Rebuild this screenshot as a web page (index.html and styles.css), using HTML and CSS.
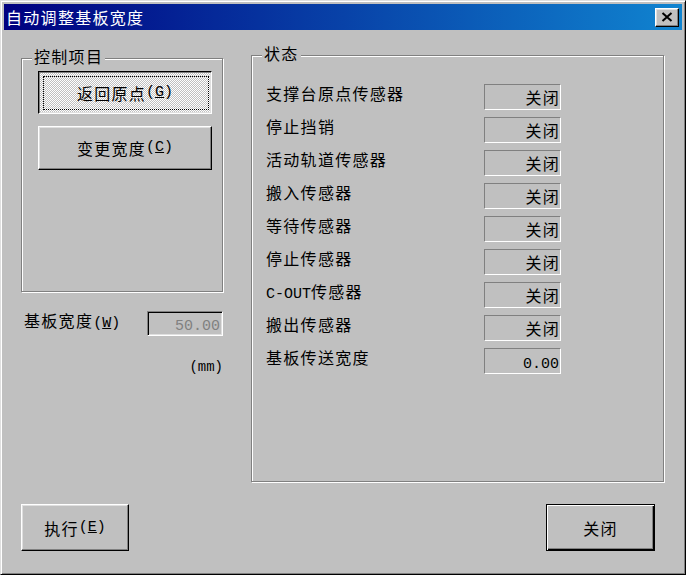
FILE: index.html
```html
<!DOCTYPE html>
<html lang="zh-CN">
<head>
<meta charset="utf-8">
<title>自动调整基板宽度</title>
<link rel="stylesheet" href="styles.css">
</head>
<body>
<div class="window">
  <div class="titlebar">
    <span class="title">自动调整基板宽度</span>
    <div class="close-btn">
      <svg width="12" height="10" viewBox="0 0 12 10"><path d="M1.5 1 L10.5 9 M10.5 1 L1.5 9" stroke="#000" stroke-width="2" fill="none"/></svg>
    </div>
  </div>
  <div class="body">
    <div class="top">
      <div class="left">
        <div class="group ctrl">
          <span class="legend">控制项目</span>
          <div class="btn checked b1">返回原点<span class="a">(<u>G</u>)</span></div>
          <div class="btn b2">变更宽度<span class="a">(<u>C</u>)</span></div>
        </div>
        <div class="width-row">
          <span class="lbl">基板宽度<span class="a">(<u>W</u>)</span></span>
          <div class="field"><span class="a">50.00</span></div>
        </div>
        <div class="unit"><span class="a">(mm)</span></div>
      </div>
      <div class="group status">
        <span class="legend">状态</span>
        <div class="grid">
          <span class="name">支撑台原点传感器</span><span class="val">关闭</span>
          <span class="name">停止挡销</span><span class="val">关闭</span>
          <span class="name">活动轨道传感器</span><span class="val">关闭</span>
          <span class="name">搬入传感器</span><span class="val">关闭</span>
          <span class="name">等待传感器</span><span class="val">关闭</span>
          <span class="name">停止传感器</span><span class="val">关闭</span>
          <span class="name"><span class="a">C-OUT</span>传感器</span><span class="val">关闭</span>
          <span class="name">搬出传感器</span><span class="val">关闭</span>
          <span class="name">基板传送宽度</span><span class="val num"><span class="a">0.00</span></span>
        </div>
      </div>
    </div>
    <div class="bottom">
      <div class="btn big exec">执行<span class="a">(<u>E</u>)</span></div>
      <div class="btn big default">关闭</div>
    </div>
  </div>
</div>
</body>
</html>
```
FILE: styles.css
```css
html, body {
  margin: 0;
  padding: 0;
}
body {
  font-family: "Noto Sans CJK SC", "Noto Sans", sans-serif;
  font-size: 16px;
  line-height: 16px;
  letter-spacing: 1.3px;
  color: #000;
  background: #c0c0c0;
}
.a {
  font-family: "Liberation Mono", "DejaVu Sans Mono", monospace;
  font-size: 15px;
  letter-spacing: 0;
}
.window {
  width: 686px;
  height: 575px;
  box-sizing: border-box;
  border: 1px solid;
  border-color: #dfdfdf #000 #000 #dfdfdf;
  box-shadow: inset 1px 1px 0 #fff, inset -1px -1px 0 #808080;
  padding: 3px;
  background: #c0c0c0;
  display: flex;
  flex-direction: column;
}
.titlebar {
  height: 26px;
  background: linear-gradient(to right, #000080, #1084d0);
  display: flex;
  align-items: center;
  justify-content: space-between;
  padding: 0 3px 0 2px;
  flex: none;
}
.title {
  color: #fff;
}
.close-btn {
  width: 24px;
  height: 19px;
  box-sizing: border-box;
  background: #c0c0c0;
  border: 1px solid;
  border-color: #fff #000 #000 #fff;
  box-shadow: inset -1px -1px 0 #808080, inset 1px 1px 0 #dfdfdf;
  display: flex;
  align-items: center;
  justify-content: center;
}
.close-btn svg {
  display: block;
  margin: 0 1px 1px 0;
}
.body {
  flex: 1;
  padding: 25px 18px 0 17px;
  display: flex;
  flex-direction: column;
}
.top {
  display: flex;
  gap: 28px;
}
.left {
  width: 202px;
  display: flex;
  flex-direction: column;
}
.group {
  position: relative;
  box-sizing: border-box;
  border: 1px solid #808080;
  box-shadow: inset 1px 1px 0 #fff, 1px 1px 0 #fff;
}
.legend {
  position: absolute;
  top: -11px;
  left: 10px;
  padding: 0 2px;
  background: #c0c0c0;
}
.ctrl {
  width: 202px;
  height: 234px;
  margin-top: 3px;
  padding: 12px 0 0 16px;
  display: flex;
  flex-direction: column;
  gap: 12px;
}
.btn {
  position: relative;
  box-sizing: border-box;
  border: 1px solid;
  border-color: #fff #000 #000 #fff;
  box-shadow: inset -1px -1px 0 #808080, inset 1px 1px 0 #dfdfdf;
  display: flex;
  align-items: center;
  justify-content: center;
  background: #c0c0c0;
}
.b1 {
  width: 174px;
  height: 43px;
}
.b2 {
  width: 174px;
  height: 44px;
}
.checked {
  border-color: #000 #fff #fff #000;
  box-shadow: inset 1px 1px 0 #808080, inset -1px -1px 0 #dfdfdf;
  background: repeating-conic-gradient(#fff 0 25%, #c0c0c0 0 50%) 0 0 / 2px 2px;
}
.checked::after {
  content: "";
  position: absolute;
  top: 4px;
  left: 4px;
  right: 2px;
  bottom: 3px;
  border: 1px dotted #000;
}
.width-row {
  margin-top: 19px;
  display: flex;
  align-items: flex-start;
  justify-content: space-between;
}
.lbl {
  margin-left: 3px;
  padding-top: 1px;
}
.field {
  width: 76px;
  height: 25px;
  box-sizing: border-box;
  border: 1px solid;
  border-color: #808080 #fff #fff #808080;
  box-shadow: inset 1px 1px 0 #000, inset -1px -1px 0 #dfdfdf;
  color: #808080;
  text-align: right;
  line-height: 23px;
  padding-right: 2px;
}
.unit {
  margin-top: 20px;
  text-align: right;
}
.unit .a {
  font-size: 14px;
}
.status {
  width: 413px;
  height: 427px;
  padding: 28px 0 0 14px;
}
.grid {
  display: grid;
  grid-template-columns: 218px 77px;
  grid-auto-rows: 26px;
  row-gap: 7px;
}
.name {
  padding-top: 1px;
  white-space: nowrap;
}
.val {
  box-sizing: border-box;
  border: 1px solid;
  border-color: #808080 #fff #fff #808080;
  text-align: right;
  line-height: 24px;
  white-space: nowrap;
}
.val.num {
  padding-right: 1px;
}
.bottom {
  margin-top: 22px;
  padding-right: 9px;
  display: flex;
  justify-content: space-between;
}
.big {
  height: 47px;
}
.exec {
  width: 108px;
}
.default {
  width: 109px;
  border: 1px solid #000;
  box-shadow: inset 1px 1px 0 #fff, inset -1px -1px 0 #000, inset -2px -2px 0 #808080;
}
```
